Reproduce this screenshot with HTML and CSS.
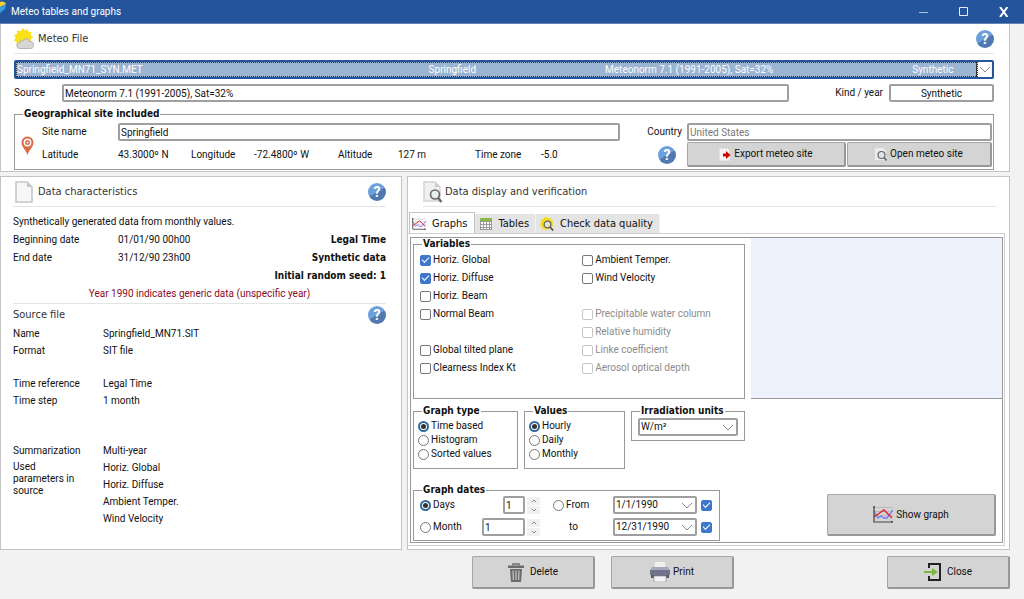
FILE: index.html
```html
<!DOCTYPE html>
<html lang="en">

<head>
    <meta charset="utf-8">
    <meta name="viewport" content="width=device-width, initial-scale=1.0">
    <title>Meteo tables and graphs</title>
    <link rel="stylesheet" href="styles.css">
</head>

<body>

<!-- icons used more than once -->
<svg class="sprite" aria-hidden="true">
    <symbol id="icon-graph" viewBox="0 0 20 17">
        <path d="M1 1.500h19M1 5.500h19M1 9.500h19" stroke="#b4b4b4" stroke-width=".8" fill="none"/>
        <path d="M1 5l4 7 3-2 3 2h3l6-8" stroke="#7777f5" stroke-width="1.300" fill="none"/>
        <path d="M1 11l10-7 8 8" stroke="#e0242c" stroke-width="1.400" fill="none"/>
        <path d="M1 0v16h19" stroke="#444" stroke-width="1.200" fill="none"/>
        <path d="M0 2l1-2 1 2zM18 14.500l2 1.500-2 1z" fill="#444"/>
    </symbol>
    <symbol id="icon-page" viewBox="0 0 18 22">
        <path d="M1 1h11l5 5v15H1z" fill="#f7f7f7" stroke="#c6c6c6" stroke-width="1.600"/>
        <path d="M12 1v5h5z" fill="#c6c6c6"/>
    </symbol>
    <symbol id="icon-search-page" viewBox="0 0 20 22">
        <path d="M1 1h11l5 5v14H1z" fill="#f0f0f0" stroke="#d2d2d2" stroke-width="1.400"/>
        <path d="M12 1v5h5z" fill="#ccc"/>
        <circle cx="12" cy="13.500" r="4.500" fill="#e9edf0" stroke="#666" stroke-width="1.600"/>
        <path d="M15 17l3.500 4" stroke="#666" stroke-width="2.200"/>
    </symbol>
</svg>

<header class="titlebar">
    <svg class="app-icon" viewBox="0 0 7 13" aria-hidden="true">
        <path d="M0 2c3-1 5 0 6 2L0 7z" fill="#f6d327"/>
        <path d="M0 7l6-3-1 5-5 4z" fill="#3d9be0"/>
    </svg>
    <span class="title">Meteo tables and graphs</span>
    <button type="button" class="win-btn" aria-label="Minimize"><svg viewBox="0 0 10 10"><path d="M0 5.500h9" stroke="#a9c0e4" fill="none"/></svg></button>
    <button type="button" class="win-btn" aria-label="Maximize"><svg viewBox="0 0 10 10"><path d="M.5.5h8v8h-8z" stroke="#e6edf8" fill="none"/></svg></button>
    <button type="button" class="win-btn" aria-label="Close window"><svg viewBox="0 0 10 10"><path d="M1 0l7.500 10M8.500 0L1 10" stroke="#fff" stroke-width="2" fill="none"/></svg></button>
</header>

<main class="window">

    <section class="panel meteo">
        <div class="panel-head">
            <svg class="icon-sun" viewBox="0 0 20 21" aria-hidden="true">
                <path d="M9 0l2 2.500 3-1.500.5 3 3.200.2-1 3 2.500 2-2.500 2 .5 3-3.200.3-1 3-3-1.200L7.500 19l-1.700-2.700-3.200.7.100-3.300L0 12.500 1.700 9.800 0 7l3-1.200L3 2.500l3.200.7z" fill="#f9e01b"/>
                <path d="M6 20.500a3 3 0 0 1-.5-6c.5-1.500 2-2 3.300-1.500 1.200-3 5.700-3 6.700.300 4 .2 5 3 4 5.200-.5 1.300-1.500 2-3 2z" fill="#d6d6d6" stroke="#a8a8a8" stroke-width=".8"/>
            </svg>
            <h2>Meteo File</h2>
            <button type="button" class="help" aria-label="Help on meteo file">?</button>
        </div>

        <div class="file-combo">
            <select class="file-select" aria-label="Meteo file">
                <option>Springfield_MN71_SYN.MET</option>
            </select>
            <div class="file-columns">
                <span>Springfield</span>
                <span>Meteonorm 7.1 (1991-2005), Sat=32%</span>
                <span>Synthetic</span>
            </div>
        </div>

        <div class="source-row">
            <label for="source">Source</label>
            <input type="text" id="source" class="field source-field" value="Meteonorm 7.1 (1991-2005), Sat=32%">
            <label for="kind" class="kind-label">Kind / year</label>
            <input type="text" id="kind" class="field kind-field" value="Synthetic">
        </div>

        <fieldset class="group site">
            <legend>Geographical site included</legend>
            <div class="site-grid">
                <svg class="pin" viewBox="0 0 13 19" aria-hidden="true">
                    <path d="M6.500 19C5 14 .5 11 .5 6.500a6 6 0 0 1 12 0C12.500 11 8 14 6.500 19z" fill="#dd6b47"/>
                    <circle cx="6.500" cy="6.500" r="3.200" fill="none" stroke="#fff" stroke-width="1.400"/>
                    <circle cx="6.500" cy="6.500" r="1" fill="#fff"/>
                </svg>
                <div class="site-name">
                    <label for="site">Site name</label>
                    <input type="text" id="site" class="field" value="Springfield">
                </div>
                <label for="country" class="country-label">Country</label>
                <input type="text" id="country" class="field country-field" value="United States">
                <div class="coords">
                    <span>Latitude</span><span>43.3000º N</span>
                    <span>Longitude</span><span>-72.4800º W</span>
                    <span>Altitude</span><span>127 m</span>
                    <span>Time zone</span><span>-5.0</span>
                </div>
                <button type="button" class="help site-help" aria-label="Help on site">?</button>
                <div class="site-buttons">
                    <button type="button" class="btn">
                        <svg class="icon-small" viewBox="0 0 12 13" aria-hidden="true">
                            <path d="M.5.5h8l2 2v10h-10z" fill="#f3f3f3" stroke="#e2e2e2"/>
                            <path d="M4 5.500h3V3L11.500 7 7 11V8.500H4z" fill="#d40000"/>
                        </svg>
                        Export meteo site
                    </button>
                    <button type="button" class="btn">
                        <svg class="icon-small" viewBox="0 0 12 13" aria-hidden="true">
                            <path d="M0 0h8l3 3v9H0z" fill="#ececec"/>
                            <circle cx="6.500" cy="7" r="3.500" fill="#dfe3e6" stroke="#666" stroke-width="1.200"/>
                            <path d="M9 9.500l2.500 3" stroke="#666" stroke-width="1.600"/>
                        </svg>
                        Open meteo site
                    </button>
                </div>
            </div>
        </fieldset>
    </section>

    <div class="columns">

        <section class="panel data">
            <div class="panel-head">
                <svg class="icon-page" aria-hidden="true"><use href="#icon-page"/></svg>
                <h2>Data characteristics</h2>
                <button type="button" class="help" aria-label="Help on data characteristics">?</button>
            </div>
            <div class="dates">
                <p class="wide">Synthetically generated data from monthly values.</p>
                <span>Beginning date</span><span>01/01/90 00h00</span><strong>Legal Time</strong>
                <span>End date</span><span>31/12/90 23h00</span><strong>Synthetic data</strong>
                <strong class="wide">Initial random seed: 1</strong>
                <p class="wide warning">Year 1990 indicates generic data (unspecific year)</p>
            </div>
            <div class="source-head">
                <h2>Source file</h2>
                <button type="button" class="help" aria-label="Help on source file">?</button>
            </div>
            <dl class="facts">
                <dt>Name</dt><dd>Springfield_MN71.SIT</dd>
                <dt>Format</dt><dd>SIT file</dd>
            </dl>
            <dl class="facts">
                <dt>Time reference</dt><dd>Legal Time</dd>
                <dt>Time step</dt><dd>1 month</dd>
            </dl>
            <dl class="facts facts-last">
                <dt>Summarization</dt><dd>Multi-year</dd>
                <dt class="used">Used parameters in source</dt>
                <dd>Horiz. Global</dd>
                <dd>Horiz. Diffuse</dd>
                <dd>Ambient Temper.</dd>
                <dd>Wind Velocity</dd>
            </dl>
        </section>

        <section class="panel display">
            <div class="panel-head">
                <svg class="icon-search" aria-hidden="true"><use href="#icon-search-page"/></svg>
                <h2>Data display and verification</h2>
            </div>

            <div class="tabs" role="tablist">
                <button type="button" class="tab active" role="tab" aria-selected="true">
                    <svg class="icon-tab" aria-hidden="true"><use href="#icon-graph"/></svg>
                    Graphs
                </button>
                <button type="button" class="tab" role="tab" aria-selected="false">
                    <svg class="icon-tab table-icon" viewBox="0 0 12 12" aria-hidden="true">
                        <path d="M0 0h12v12H0z" fill="#999"/>
                        <path d="M0 0h12v3H0z" fill="#8cb84c"/>
                        <path d="M1 4h2v2H1zM4 4h2v2H4zM7 4h2v2H7zM10 4h1v2h-1zM1 7h2v2H1zM4 7h2v2H4zM7 7h2v2H7zM10 7h1v2h-1zM1 10h2v1H1zM4 10h2v1H4zM7 10h2v1H7zM10 10h1v1h-1z" fill="#fff"/>
                    </svg>
                    Tables
                </button>
                <button type="button" class="tab" role="tab" aria-selected="false">
                    <svg class="icon-tab check-icon" viewBox="0 0 14 14" aria-hidden="true">
                        <path d="M6 0l2 1.500L10.500.5l.5 2.500 2.500 1-1 2.500 1 2.500-2.500 1-1 2.500-2.500-.5-2 1.500-1.500-2-2.500.2-.3-2.500L0 7.500 1.200 5.500.5 3l2.500-.7L4 .5z" fill="#f5dc1c"/>
                        <circle cx="7.500" cy="7.500" r="3.400" fill="#e4e4c8" stroke="#666" stroke-width="1.300"/>
                        <path d="M10 10l3.200 3.500" stroke="#555" stroke-width="1.800"/>
                    </svg>
                    Check data quality
                </button>
            </div>

            <div class="tab-page">
                <div class="tab-body">
                    <div class="top-row">
                        <fieldset class="group variables">
                            <legend>Variables</legend>
                            <div class="checks">
                                <label><input type="checkbox" checked>Horiz. Global</label>
                                <label><input type="checkbox" checked>Horiz. Diffuse</label>
                                <label><input type="checkbox">Horiz. Beam</label>
                                <label><input type="checkbox">Normal Beam</label>
                                <label class="after-gap"><input type="checkbox">Global tilted plane</label>
                                <label><input type="checkbox">Clearness Index Kt</label>
                            </div>
                            <div class="checks">
                                <label><input type="checkbox">Ambient Temper.</label>
                                <label><input type="checkbox">Wind Velocity</label>
                                <label class="after-gap off"><input type="checkbox" disabled>Precipitable water column</label>
                                <label class="off"><input type="checkbox" disabled>Relative humidity</label>
                                <label class="off"><input type="checkbox" disabled>Linke coefficient</label>
                                <label class="off"><input type="checkbox" disabled>Aerosol optical depth</label>
                            </div>
                        </fieldset>
                        <div class="preview"></div>
                    </div>

                    <div class="options-row">
                        <fieldset class="group radios graph-type">
                            <legend>Graph type</legend>
                            <label><input type="radio" name="type" checked>Time based</label>
                            <label><input type="radio" name="type">Histogram</label>
                            <label><input type="radio" name="type">Sorted values</label>
                        </fieldset>
                        <fieldset class="group radios">
                            <legend>Values</legend>
                            <label><input type="radio" name="values" checked>Hourly</label>
                            <label><input type="radio" name="values">Daily</label>
                            <label><input type="radio" name="values">Monthly</label>
                        </fieldset>
                        <fieldset class="group units">
                            <legend>Irradiation units</legend>
                            <select class="field" aria-label="Irradiation units">
                                <option>W/m²</option>
                            </select>
                        </fieldset>
                    </div>

                    <div class="bottom-row">
                        <fieldset class="group graph-dates">
                            <legend>Graph dates</legend>
                            <div class="dates-grid">
                                <label><input type="radio" name="period" checked>Days</label>
                                <div class="spin">
                                    <input type="number" class="field days" value="1" aria-label="Number of days">
                                    <span class="spin-buttons">
                                        <button type="button" aria-label="More days"><svg viewBox="0 0 6 4"><path d="M1 3l2-2 2 2"/></svg></button>
                                        <button type="button" aria-label="Fewer days"><svg viewBox="0 0 6 4"><path d="M1 1l2 2 2-2"/></svg></button>
                                    </span>
                                </div>
                                <label class="from-label"><input type="radio" name="period">From</label>
                                <select class="field" aria-label="From date"><option>1/1/1990</option></select>
                                <input type="checkbox" checked aria-label="Use from date">

                                <label><input type="radio" name="period">Month</label>
                                <div class="spin">
                                    <input type="number" class="field months" value="1" aria-label="Month">
                                    <span class="spin-buttons">
                                        <button type="button" aria-label="Next month"><svg viewBox="0 0 6 4"><path d="M1 3l2-2 2 2"/></svg></button>
                                        <button type="button" aria-label="Previous month"><svg viewBox="0 0 6 4"><path d="M1 1l2 2 2-2"/></svg></button>
                                    </span>
                                </div>
                                <label for="to-date" class="to-label">to</label>
                                <select class="field" id="to-date"><option>12/31/1990</option></select>
                                <input type="checkbox" checked aria-label="Use to date">
                            </div>
                        </fieldset>
                        <button type="button" class="btn show-graph">
                            <svg class="icon-graph" aria-hidden="true"><use href="#icon-graph"/></svg>
                            Show graph
                        </button>
                    </div>
                </div>
            </div>
        </section>
    </div>

    <footer class="actions">
        <button type="button" class="btn">
            <svg class="icon-trash" viewBox="0 0 16 19" aria-hidden="true">
                <path d="M5 2.500V1h6v1.500" fill="none" stroke="#6b6b6b" stroke-width="1.500"/>
                <path d="M0 2.500h16V5H0zM2 6h12l-1 13H3z" fill="#6b6b6b"/>
                <path d="M5 7.500l.4 9.500M8 7.500V17M11 7.500L10.600 17" stroke="#cfcfcf" stroke-width="1.100"/>
            </svg>
            Delete
        </button>
        <button type="button" class="btn print">
            <svg class="icon-print" viewBox="0 0 20 20" aria-hidden="true">
                <path d="M5 0h10v7H5z" fill="#f0f0ec"/>
                <path d="M2 5h16l2 3H0z" fill="#a6a8ba"/>
                <path d="M0 8h20v5H0z" fill="#71738c"/>
                <path d="M1 13h18v3H1z" fill="#565870"/>
                <path d="M4 14h12v6H4z" fill="#f4f4f4" stroke="#a0a0a8" stroke-width=".8"/>
            </svg>
            Print
        </button>
        <button type="button" class="btn close">
            <svg class="icon-exit" viewBox="0 0 17 18" aria-hidden="true">
                <path d="M5 5V1h11v16H5v-4" fill="none" stroke="#222" stroke-width="2"/>
                <path d="M0 8h8V5l6 4-6 4v-3H0z" fill="#7cb342"/>
            </svg>
            Close
        </button>
    </footer>

</main>

</body>

</html>
```

FILE: styles.css
```css
* {
    box-sizing: border-box;
}

body {
    margin: 0;
    min-height: 100vh;
    display: flex;
    flex-direction: column;
    background-color: #f2f2f2;
    color: #111;
}

body,
button,
input,
select {
    font-family: Roboto, "Noto Sans", sans-serif;
    font-size: 10px;
    line-height: 12px;
}

h2,
legend,
strong,
.tab {
    font-family: "DejaVu Sans Condensed", "Noto Sans", sans-serif;
}

h2,
p,
dl,
dd {
    margin: 0;
    font-weight: normal;
}

h2 {
    flex: 1;
    font-size: 11px;
    line-height: 16px;
    color: #333;
}

button {
    padding: 0;
    border: none;
    color: inherit;
}

svg {
    display: block;
    flex: none;
}

.sprite {
    position: absolute;
    width: 0;
    height: 0;
}

/* Title bar */
.titlebar {
    height: 24px;
    display: flex;
    align-items: center;
    background: #24549c;
    border-bottom: 1px solid #6685b5;
    color: #fff;
}

.app-icon {
    width: 7px;
    height: 13px;
    align-self: flex-start;
}

.title {
    flex: 1;
    padding-left: 4px;
}

.win-btn {
    width: 40px;
    height: 20px;
    padding-left: 15px;
    background: none;
}

.win-btn svg {
    width: 10px;
    height: 10px;
}

.window {
    flex: 1;
    display: flex;
    flex-direction: column;
    padding-right: 14px;
}

/* Panels */
.panel {
    background: #fff;
    border: 1px solid #c3c3c3;
}

.panel-head {
    height: 30px;
    display: flex;
    align-items: center;
    border-bottom: 1px solid #e4e4e4;
}

.help {
    width: 18px;
    height: 18px;
    border-radius: 50%;
    background: linear-gradient(150deg, #6d9fda 50%, #4f79b0 50%);
    color: #fff;
    font-size: 14px;
    font-weight: bold;
    line-height: 18px;
    text-align: center;
}

.field {
    width: 100%;
    min-width: 0;
    height: 18px;
    padding: 0 1px;
    border: 2px solid #9f9f9f;
    border-radius: 2px;
    background: #fff;
    color: #111;
}

select {
    appearance: none;
}

select.field {
    background: #fff url("data:image/svg+xml,%3Csvg xmlns='http://www.w3.org/2000/svg' width='12' height='7'%3E%3Cpath d='M1 1l5 5 5-5' fill='none' stroke='%23888'/%3E%3C/svg%3E") no-repeat right 2px center;
}

.btn {
    display: flex;
    align-items: center;
    justify-content: center;
    gap: 3px;
    background: #d4d4d4;
    border: 1px solid #a6a6a6;
    border-right: 2px solid #989898;
    border-bottom: 2px solid #989898;
    border-radius: 2px;
}

.group {
    min-width: 0;
    margin: 0;
    padding: 0;
    border: 1px solid #999;
}

legend {
    margin-left: 8px;
    padding: 0 1px;
    font-weight: bold;
}

/* Meteo file */
.meteo {
    padding: 0 15px 1px 13px;
    border-top: none;
}

.icon-sun {
    width: 20px;
    height: 21px;
    margin-right: 4px;
}

.file-combo {
    position: relative;
    margin-top: 6px;
}

.file-select {
    display: block;
    width: 100%;
    height: 19px;
    padding: 0 1px;
    border: 2px solid #24549c;
    border-radius: 2px;
    background-image: url("data:image/svg+xml,%3Csvg xmlns='http://www.w3.org/2000/svg' width='12' height='7'%3E%3Cpath d='M1 1l5 5 5-5' fill='none' stroke='%23888'/%3E%3C/svg%3E"), linear-gradient(to left, #fff 14px, #333 14px, #333 15px, #9ab4d2 15px);
    background-repeat: no-repeat;
    background-position: right 1px center;
    color: #fff;
}

/* the other columns of the selected file lie over the drop-down */
.file-columns {
    position: absolute;
    top: 2px;
    right: 16px;
    bottom: 2px;
    left: 2px;
    display: grid;
    grid-template-columns: 177fr 308fr 65fr;
    align-items: center;
    padding-left: 42%;
    border: 1px dotted #333;
    color: #fff;
    pointer-events: none;
}

.source-row {
    display: flex;
    align-items: center;
    margin-top: 5px;
}

.source-row label:first-child {
    width: 48px;
}

.source-field {
    flex: 1;
}

.kind-label {
    width: 100px;
    padding-right: 6px;
    text-align: right;
}

.kind-field {
    width: 105px;
    text-align: center;
}

.site {
    margin-top: 6px;
}

.site-grid {
    display: grid;
    grid-template-columns: 27px 578fr 67px 305fr;
    row-gap: 1px;
    align-items: center;
    padding: 3px 1px 2px 0;
}

.pin {
    grid-row: span 2;
    width: 13px;
    height: 19px;
    margin-left: 6px;
}

.site-name {
    display: flex;
    align-items: center;
}

.site-name label {
    flex: 0 0 76px;
}

.country-label {
    padding-right: 5px;
    text-align: right;
}

.country-field {
    color: #777;
}

.coords {
    display: grid;
    grid-template-columns: 76px 73px 63px 84px 60px 77px 66px 1fr;
}

.site-help {
    justify-self: center;
    margin-left: 27px;
}

.site-buttons {
    display: grid;
    grid-template-columns: 159fr 145fr;
    gap: 1px;
}

.site-buttons .btn {
    height: 25px;
}

.icon-small {
    width: 12px;
    height: 13px;
}

/* Lower half */
.columns {
    flex: 1;
    display: grid;
    grid-template-columns: 2fr 3fr;
    gap: 5px;
    margin-top: 4px;
}

.data {
    padding: 0 15px 0 12px;
}

.icon-page {
    width: 18px;
    height: 22px;
    margin: 0 5px 0 2px;
}

.dates {
    display: grid;
    grid-template-columns: 105px 1fr auto;
    grid-auto-rows: 18px;
    align-items: center;
    padding-top: 6px;
    border-bottom: 1px solid #e4e4e4;
}

.dates strong {
    text-align: right;
}

.wide {
    grid-column: 1 / -1;
}

.warning {
    color: #8b0a1e;
    text-align: center;
}

.source-head {
    display: flex;
    align-items: center;
    height: 21px;
}

.facts {
    display: grid;
    grid-template-columns: 90px 1fr;
    grid-auto-rows: 17px;
    margin-bottom: 16px;
    line-height: 17px;
}

.facts-last {
    margin-top: 33px;
}

.facts dd {
    grid-column: 2;
}

.facts .used {
    grid-row: 2 / span 4;
    width: 64px;
    padding-top: 2px;
    line-height: 12px;
}

/* Data display */
.display {
    display: flex;
    flex-direction: column;
}

.display .panel-head {
    margin: 0 13px 0 15px;
}

.icon-search {
    width: 20px;
    height: 22px;
    margin-right: 2px;
}

.tabs {
    display: flex;
    align-items: flex-end;
    height: 27px;
    margin-bottom: -1px;
    padding-left: 1px;
}

.tab {
    display: flex;
    align-items: center;
    height: 19px;
    margin-bottom: 1px;
    padding: 0 6px 0 4px;
    background: #e4e4e4;
    border-right: 1px solid #f2f2f2;
    font-size: 11px;
}

.tab.active {
    height: 22px;
    margin-bottom: 0;
    padding-left: 2px;
    background: #fff;
    border: 1px solid #c3c3c3;
    border-bottom: none;
}

.icon-tab {
    width: 14px;
    height: 12px;
    margin-right: 6px;
}

.check-icon {
    height: 14px;
}

.tab-page {
    flex: 1;
    display: flex;
    margin-right: 4px;
    margin-bottom: 3px;
    padding: 3px 1px 2px 2px;
    border: 1px solid #d0d0d0;
    border-left: none;
}

.tab-body {
    flex: 1;
    display: flex;
    flex-direction: column;
    border: 1px solid #999;
}

.top-row {
    display: grid;
    grid-template-columns: 57fr 43fr;
    gap: 6px;
    padding-left: 2px;
}

.variables {
    display: grid;
    grid-template-columns: 1fr 1fr;
    height: 161px;
    padding: 1px 0 0 6px;
}

.variables legend {
    margin-left: 2px;
}

.preview {
    background: #edf1fb;
    border-bottom: 1px solid #999;
}

label {
    white-space: nowrap;
}

.checks label,
.radios label,
.dates-grid label {
    display: flex;
    align-items: center;
    gap: 2px;
}

.checks label {
    height: 18px;
}

.checks .after-gap {
    margin-top: 18px;
}

.off {
    color: #8c8c8c;
}

input[type="checkbox"],
input[type="radio"] {
    appearance: none;
    flex: none;
    display: grid;
    place-items: center;
    width: 11px;
    height: 11px;
    margin: 0;
    border: 1px solid #777;
    background: #fff;
}

input[type="checkbox"] {
    border-radius: 2px;
}

input[type="checkbox"]:disabled {
    border-color: #c4c4c4;
}

input[type="checkbox"]:checked {
    background: #3f77cc;
    border-color: #3f77cc;
}

input[type="checkbox"]:checked::after {
    content: "";
    width: 6px;
    height: 3px;
    margin-bottom: 2px;
    border: solid #fff;
    border-width: 0 0 1px 1px;
    transform: rotate(-45deg);
}

input[type="radio"] {
    border-radius: 50%;
}

input[type="radio"]:checked {
    border: 2px solid #2f689e;
}

input[type="radio"]:checked::after {
    content: "";
    width: 5px;
    height: 5px;
    border-radius: 50%;
    background: #333;
}

.options-row {
    display: flex;
    align-items: flex-start;
    gap: 6px;
    margin-top: 6px;
    padding-left: 2px;
}

.radios {
    width: 101px;
    height: 64px;
    padding: 2px 4px 0;
}

.radios legend {
    margin-left: 4px;
}

.graph-type {
    width: 105px;
}

.radios label {
    height: 14px;
}

.units {
    width: 114px;
    padding: 1px 6px 4px;
}

.units legend {
    margin-left: 2px;
}

.bottom-row {
    flex: 1;
    display: flex;
    align-items: flex-end;
    justify-content: space-between;
    padding: 0 6px 1px 2px;
}

.graph-dates {
    padding: 0 7px 2px 6px;
}

.graph-dates legend {
    margin-left: 2px;
}

.dates-grid {
    display: grid;
    grid-template-columns: 44px 72px 65px 84px 11px;
    grid-auto-rows: 22px;
    align-items: center;
    column-gap: 4px;
    margin-top: -2px;
}

.spin {
    display: flex;
    align-items: center;
    justify-content: flex-end;
    gap: 2px;
}

.spin input {
    appearance: textfield;
}

.spin input::-webkit-inner-spin-button {
    appearance: none;
    margin: 0;
}

.days {
    width: 22px;
}

.months {
    width: 43px;
}

.spin-buttons {
    width: 13px;
    display: grid;
    gap: 1px;
}

.spin-buttons button {
    height: 8px;
    background: #f0f0f0;
}

.spin-buttons svg {
    width: 6px;
    height: 4px;
    margin: 0 auto;
    fill: none;
    stroke: #888;
}

.dates-grid .from-label {
    padding-left: 9px;
}

.dates-grid .to-label {
    padding-left: 25px;
}

.show-graph {
    width: 169px;
    height: 42px;
    margin-bottom: 5px;
}

.icon-graph {
    width: 20px;
    height: 17px;
}

/* Footer */
.actions {
    display: flex;
    justify-content: flex-end;
    gap: 16px;
    padding: 6px 0 10px;
}

.actions .btn {
    width: 123px;
    height: 33px;
    gap: 6px;
}

.actions .print {
    gap: 3px;
}

.actions .close {
    margin-left: 137px;
}

.icon-trash {
    width: 16px;
    height: 19px;
}

.icon-print {
    width: 20px;
    height: 20px;
}

.icon-exit {
    width: 17px;
    height: 18px;
}
```
